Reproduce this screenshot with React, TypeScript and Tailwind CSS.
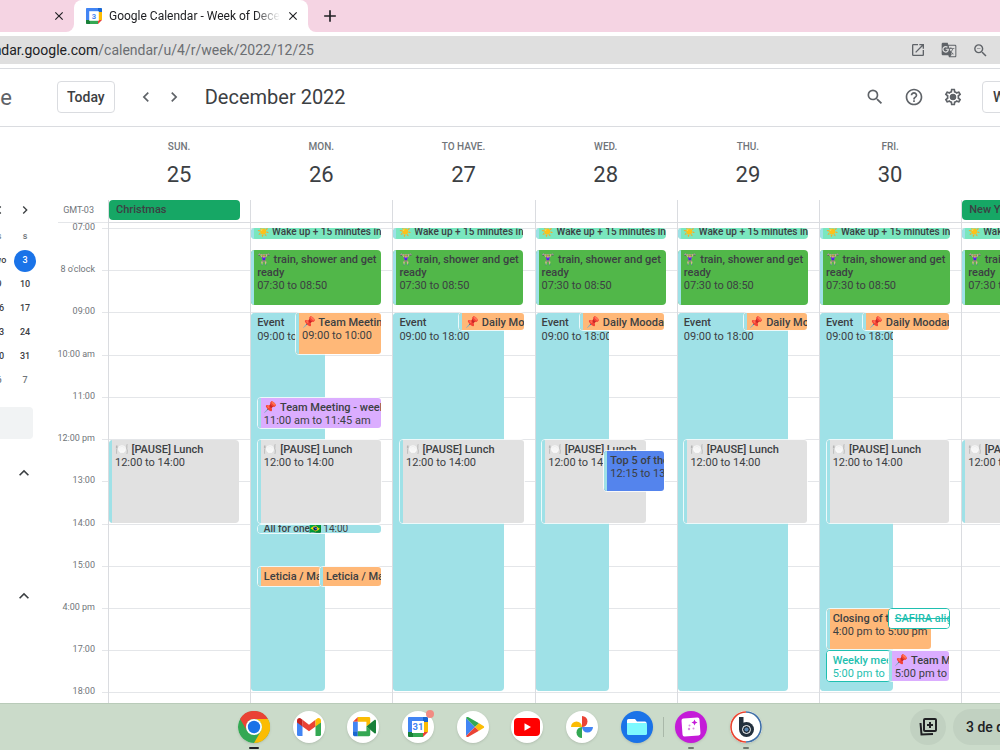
import React from 'react'
import clsx from 'clsx'
import {
  MdAdd,
  MdChevronLeft,
  MdChevronRight,
  MdClose,
  MdExpandLess,
  MdGTranslate,
  MdHelpOutline,
  MdOpenInNew,
  MdOutlineSettings,
  MdSearch,
  MdZoomOut,
} from 'react-icons/md'

const FIRST_HOUR = 7
// the last row only shows a quarter of an hour
const VISIBLE_HOURS = 11.25

type Tone = 'mint' | 'green' | 'cyan' | 'orange' | 'purple' | 'gray' | 'blue' | 'outline'

interface CalendarEvent {
  title: string
  time?: string
  start: number
  end: number
  left: number
  width: number
  tone: Tone
  /** Stacked on top of another event, so it gets a white edge */
  stacked?: boolean
  declined?: boolean
}

interface Day {
  name: string
  date: string
  allDay?: string
  events: CalendarEvent[]
}

const TONES: Record<Tone, string> = {
  mint: 'bg-[#7ae7bf] border-[#9fe1e7]',
  green: 'bg-[#51b749] border-[#9fe1e7]',
  cyan: 'bg-[#9fe1e7] border-[#9fe1e7]',
  orange: 'bg-[#ffb878] border-[#9fe1e7]',
  purple: 'bg-[#dbadff] border-[#9fe1e7]',
  gray: 'bg-[#e1e1e1] border-[#9fe1e7]',
  blue: 'bg-[#5484ed] border-[#9fe1e7]',
  outline: 'bg-white border-white text-[#1fbfb0]',
}

const wakeUp: CalendarEvent = {
  title: '☀️ Wake up + 15 minutes in bed',
  start: 7,
  end: 7.25,
  left: 0,
  width: 92,
  tone: 'mint',
}

const train: CalendarEvent = {
  title: '🏋🏼‍♀️ train, shower and get ready',
  time: '07:30 to 08:50',
  start: 7.5,
  end: 8.84,
  left: 0,
  width: 92,
  tone: 'green',
}

const work = (width: number, time = '09:00 to 18:00'): CalendarEvent => ({
  title: 'Event',
  time,
  start: 9,
  end: 18,
  left: 0,
  width,
  tone: 'cyan',
})

const lunch = (left: number, width: number): CalendarEvent => ({
  title: '🍽️ [PAUSE] Lunch',
  time: '12:00 to 14:00',
  start: 12,
  end: 14,
  left,
  width,
  tone: 'gray',
  stacked: left > 0,
})

const daily = (left: number, width: number): CalendarEvent => ({
  title: '📌 Daily Moodar',
  start: 9,
  end: 9.45,
  left,
  width,
  tone: 'orange',
  stacked: true,
})

const DAYS: Day[] = [
  { name: 'Sun.', date: '25', allDay: 'Christmas', events: [lunch(0, 92)] },
  {
    name: 'Mon.',
    date: '26',
    events: [
      wakeUp,
      train,
      work(52),
      { title: '📌 Team Meeting', time: '09:00 to 10:00', start: 9, end: 10, left: 31, width: 62, tone: 'orange', stacked: true },
      { title: '📌 Team Meeting - weekly', time: '11:00 am to 11:45 am', start: 11, end: 11.75, left: 4, width: 89, tone: 'purple', stacked: true },
      lunch(4, 89),
      { title: 'All for one🇧🇷', time: '14:00', start: 14, end: 14.25, left: 4, width: 89, tone: 'cyan', stacked: true },
      { title: 'Leticia / Mari', start: 15, end: 15.5, left: 4, width: 46, tone: 'orange', stacked: true },
      { title: 'Leticia / Mari', start: 15, end: 15.5, left: 48, width: 45, tone: 'orange', stacked: true },
    ],
  },
  { name: 'To have.', date: '27', events: [wakeUp, train, work(78), daily(46, 47), lunch(4, 89)] },
  {
    name: 'Wed.',
    date: '28',
    events: [
      wakeUp,
      train,
      work(52),
      daily(31, 61),
      lunch(4, 75),
      { title: 'Top 5 of the week', time: '12:15 to 13:15', start: 12.25, end: 13.25, left: 48, width: 44, tone: 'blue', stacked: true },
    ],
  },
  { name: 'Thu.', date: '29', events: [wakeUp, train, work(78), daily(46, 46), lunch(4, 88)] },
  {
    name: 'Fri.',
    date: '30',
    events: [
      wakeUp,
      train,
      work(52),
      daily(30, 62),
      lunch(4, 88),
      { title: 'Closing of the week', time: '4:00 pm to 5:00 pm', start: 16, end: 17, left: 4, width: 75, tone: 'orange', stacked: true },
      { title: 'SAFIRA alignment', start: 16, end: 16.5, left: 48, width: 44, tone: 'outline', declined: true },
      { title: 'Weekly meeting', time: '5:00 pm to 5:45 pm', start: 17, end: 17.75, left: 4, width: 46, tone: 'outline' },
      { title: '📌 Team Meeting', time: '5:00 pm to 5:45 pm', start: 17, end: 17.75, left: 48, width: 44, tone: 'purple', stacked: true },
    ],
  },
  { name: '', date: '', allDay: "New Year's Eve", events: [wakeUp, train, lunch(0, 92)] },
]

const HOURS = [
  '07:00',
  "8 o'clock",
  '09:00',
  '10:00 am',
  '11:00',
  '12:00 pm',
  '13:00',
  '14:00',
  '15:00',
  '4:00 pm',
  '17:00',
  '18:00',
]

const MINI_MONTH = [
  ['two', '3'],
  ['9', '10'],
  ['16', '17'],
  ['23', '24'],
  ['30', '31'],
  ['6', '7'],
]

// Saturday is cut by the window edge: its column is 3/11 of a day, its content a full day wide
const DAY_COLUMNS = 'grid grid-cols-[repeat(6,minmax(0,11fr))_minmax(0,3fr)]'
const HOUR_ROWS = 'grid grid-rows-[repeat(11,minmax(0,4fr))_minmax(0,1fr)]'

const dayWidth = (index: number) => (index === DAYS.length - 1 ? 'w-[366%]' : 'w-full')

function CalendarLogo({ day, className }: { day: string; className?: string }) {
  return (
    <svg viewBox="0 0 20 20" className={className} aria-hidden="true">
      <path fill="#4285f4" d="M1 0h14v5H5v10H0V1a1 1 0 0 1 1-1z" />
      <path fill="#1967d2" d="M15 0h4a1 1 0 0 1 1 1v4h-5z" />
      <path fill="#fbbc04" d="M15 5h5v10h-5z" />
      <path fill="#34a853" d="M5 15h10v5H5z" />
      <path fill="#188038" d="M0 15h5v5H1a1 1 0 0 1-1-1z" />
      <path fill="#ea4335" d="M15 15h5l-5 5z" />
      <path fill="#fff" d="M4 4h12v12H4z" />
      <text
        x="10"
        y="13.4"
        textAnchor="middle"
        fontSize="9.5"
        fontWeight="700"
        fontFamily="Roboto, sans-serif"
        fill="#4285f4"
      >
        {day}
      </text>
    </svg>
  )
}

function TabStrip() {
  return (
    <div className="flex h-8 shrink-0 bg-white text-[#202124]">
      <div className="flex w-[74px] items-center justify-end rounded-br-lg bg-[#f5d4e3] pr-2">
        <button type="button" aria-label="Close tab">
          <MdClose className="size-3.5" />
        </button>
      </div>
      <div className="w-[234px] bg-[#f5d4e3]">
        <div className="flex h-full items-center rounded-t-lg bg-white pr-2 pl-3">
          <CalendarLogo day="3" className="mr-[7px] size-4 shrink-0" />
          <span className="flex-1 overflow-hidden mask-r-from-85% text-xs whitespace-nowrap">
            Google Calendar - Week of December
          </span>
          <button type="button" aria-label="Close tab" className="ml-1.5">
            <MdClose className="size-3.5" />
          </button>
        </div>
      </div>
      <div className="flex flex-1 items-center rounded-bl-lg bg-[#f5d4e3] pl-3">
        <button type="button" aria-label="New tab">
          <MdAdd className="size-5" />
        </button>
      </div>
    </div>
  )
}

function AddressBar() {
  return (
    <div className="shrink-0 border-b border-[#dadce0] bg-white pt-1 pb-1">
      <div className="flex h-7 items-center justify-between bg-[#dfdfdf] pr-[11px]">
        <p className="flex w-[314px] justify-end overflow-hidden text-sm whitespace-nowrap text-[#6b6e72]">
          <span className="text-[#202124]">calendar.google.com</span>/calendar/u/4/r/week/2022/12/25
        </p>
        <div className="flex items-center gap-[15px] text-[#5f6368]">
          <button type="button" aria-label="Open in new window">
            <MdOpenInNew className="size-4" />
          </button>
          <button type="button" aria-label="Translate this page">
            <MdGTranslate className="size-4" />
          </button>
          <button type="button" aria-label="Zoom out">
            <MdZoomOut className="size-[17px]" />
          </button>
        </div>
      </div>
    </div>
  )
}

function CalendarHeader() {
  return (
    <header className="flex h-[58px] shrink-0 items-center overflow-hidden border-b border-[#dadce0] pb-px text-[#3c4043]">
      <span className="flex w-3 justify-end text-[22px] whitespace-nowrap text-[#5f6368]">Google Agende</span>
      <button
        type="button"
        className="ml-[45px] h-8 rounded border border-[#dadce0] px-[9px] text-sm font-medium"
      >
        Today
      </button>
      <div className="ml-[21px] flex gap-2 text-[#5f6368]">
        <button type="button" aria-label="Previous week">
          <MdChevronLeft className="size-5" />
        </button>
        <button type="button" aria-label="Next week">
          <MdChevronRight className="size-5" />
        </button>
      </div>
      <h1 className="ml-[21px] text-xl">December 2022</h1>
      <div className="ml-auto flex items-center gap-[19px] text-[#5f6368]">
        <button type="button" aria-label="Search">
          <MdSearch className="size-5" />
        </button>
        <button type="button" aria-label="Support">
          <MdHelpOutline className="size-5" />
        </button>
        <button type="button" aria-label="Settings" className="relative">
          <MdOutlineSettings className="size-5" />
          <span className="absolute inset-0 m-auto size-1.5 rounded-full bg-[#5f6368]" />
        </button>
        <div className="w-[18px]">
          <button
            type="button"
            className="h-8 w-20 rounded border border-[#dadce0] pl-2.5 text-left text-sm font-medium text-[#3c4043]"
          >
            Week
          </button>
        </div>
      </div>
    </header>
  )
}

function Sidebar() {
  return (
    <aside className="flex w-[38px] shrink-0 flex-col items-end overflow-hidden pt-[75px] text-[9px] font-medium text-[#3c4043]">
      <div className="grid w-[52px] grid-cols-2 justify-items-center">
        <button type="button" aria-label="Previous month">
          <MdChevronLeft className="size-4" />
        </button>
        <button type="button" aria-label="Next month">
          <MdChevronRight className="size-4" />
        </button>
      </div>
      <table className="mt-[7px] w-[52px] table-fixed text-center">
        <thead>
          <tr className="h-6 text-[#70757a]">
            <th className="p-0 text-center font-medium">s</th>
            <th className="p-0 text-center font-medium">s</th>
          </tr>
        </thead>
        <tbody>
          {MINI_MONTH.map(([friday, saturday], i) => (
            <tr key={saturday} className={clsx('h-6', i === MINI_MONTH.length - 1 && 'text-[#70757a]')}>
              <td className="p-0">{friday}</td>
              <td className="p-0">
                <span
                  className={clsx(
                    'mx-auto flex size-[22px] items-center justify-center rounded-full',
                    i === 0 && 'bg-[#1a73e8] text-white'
                  )}
                >
                  {saturday}
                </span>
              </td>
            </tr>
          ))}
        </tbody>
      </table>
      <input
        type="text"
        aria-label="Search for people"
        className="mt-3.5 mr-[5px] h-8 w-[200px] shrink-0 rounded bg-[#f1f3f4]"
      />
      <button type="button" aria-label="My calendars" className="mt-6 mr-1">
        <MdExpandLess className="size-5" />
      </button>
      <button type="button" aria-label="Other calendars" className="mt-[103px] mr-1">
        <MdExpandLess className="size-5" />
      </button>
    </aside>
  )
}

function EventCard({ event }: { event: CalendarEvent }) {
  const { title, time, start, end, left, width, tone, stacked, declined } = event
  const hours = end - start
  const tiny = hours <= 0.25
  const edged = stacked || tone === 'outline'

  return (
    <button
      type="button"
      className={clsx(
        'absolute overflow-hidden rounded text-left text-[#3c4043]',
        !edged && !tiny && 'mt-px',
        stacked && 'border border-white/80',
        tone === 'outline' && 'border border-[#1fbfb0]'
      )}
      style={{
        top: `${((start - FIRST_HOUR) / VISIBLE_HOURS) * 100}%`,
        height: `calc(${(hours / VISIBLE_HOURS) * 100}% - ${edged || tiny ? 0 : 2}px)`,
        left: `${left}%`,
        width: `${width}%`,
      }}
    >
      <span
        className={clsx(
          'flex h-full border-l-[3px] pl-[3px]',
          tiny ? 'gap-1 text-[10px] leading-[8px]' : 'flex-col pt-[3px] text-[11px] leading-[13px]',
          tone === 'cyan' && 'gap-px',
          TONES[tone]
        )}
      >
        <span
          className={clsx(
            'font-medium',
            tone !== 'green' && 'whitespace-nowrap',
            declined && 'line-through'
          )}
        >
          {title}
        </span>
        {time && <span className="whitespace-nowrap">{time}</span>}
      </span>
    </button>
  )
}

function WeekGrid() {
  return (
    <section className="flex min-w-0 flex-1 flex-col">
      <div className="flex h-[73px] shrink-0">
        <div className="w-[70px] shrink-0" />
        <div className={clsx('flex-1', DAY_COLUMNS)}>
          {DAYS.map((day, i) => (
            <h2 key={i} className="flex flex-col items-center pt-[13px] font-normal">
              <span className="text-[10px] leading-[14px] font-medium text-[#70757a] uppercase">{day.name}</span>
              <span className="mt-1.5 text-[22px] leading-[30px] text-[#3c4043]">{day.date}</span>
            </h2>
          ))}
        </div>
      </div>

      <div className="flex h-[23px] shrink-0 pl-5">
        <div className="w-[50px] shrink-0 border-b border-[#e4e6e9] pr-3.5 text-right text-[9px] leading-[20px] text-[#70757a]">
          GMT-03
        </div>
        <div className={clsx('flex-1 border-b border-[#dadce0]', DAY_COLUMNS)}>
          {DAYS.map((day, i) => (
            <div key={i} className="border-l border-[#dadce0]">
              <div className={clsx('flex', dayWidth(i))}>
                {day.allDay && (
                  <button
                    type="button"
                    className="h-5 w-[93%] overflow-hidden rounded bg-[#16a765] pl-[7px] text-left text-[11px] font-medium whitespace-nowrap text-[#3c4043]"
                  >
                    {day.allDay}
                  </button>
                )}
              </div>
            </div>
          ))}
        </div>
      </div>

      <div className="flex min-h-0 flex-1">
        <div className={clsx('w-16 shrink-0 pt-[5px] pr-[7px]', HOUR_ROWS)}>
          {HOURS.map((hour) => (
            <div key={hour} className="-mt-[7px] text-right text-[9px] leading-3 text-[#70757a]">
              {hour}
            </div>
          ))}
        </div>
        <div className="relative flex min-w-0 flex-1 flex-col">
          <div className={clsx('flex-1 pt-[5px]', HOUR_ROWS)}>
            {HOURS.map((hour) => (
              <div key={hour} className="border-t border-[#e4e6e9]" />
            ))}
          </div>
          <div className={clsx('absolute inset-y-0 right-0 left-1.5', DAY_COLUMNS)}>
            {DAYS.map((day, i) => (
              <div key={i} className="border-l border-[#dadce0] pt-[5px]">
                <div className={clsx('relative h-full', dayWidth(i))}>
                  {day.events.map((event, j) => (
                    <EventCard key={j} event={event} />
                  ))}
                </div>
              </div>
            ))}
          </div>
        </div>
      </div>
    </section>
  )
}

function ChromeLogo() {
  return (
    <svg viewBox="0 0 32 32" className="size-8">
      <circle cx="16" cy="16" r="16" fill="#34a853" />
      <path fill="#ea4335" d="M2.1 8A16 16 0 0 1 29.9 8H16a8 8 0 0 0-6.9 12z" />
      <path fill="#fbbc04" d="M29.9 8A16 16 0 0 1 16 32l6.9-12A8 8 0 0 0 16 8z" />
      <circle cx="16" cy="16" r="8" fill="#fff" />
      <circle cx="16" cy="16" r="6.2" fill="#1a73e8" />
    </svg>
  )
}

function GmailLogo() {
  return (
    <svg viewBox="0 0 24 18" className="w-6">
      <path fill="#4285f4" d="M0 4l5.5 3.5V18H1.6A1.6 1.6 0 0 1 0 16.4z" />
      <path fill="#34a853" d="M24 4l-5.5 3.5V18h3.9a1.6 1.6 0 0 0 1.6-1.6z" />
      <path fill="#ea4335" d="M5.5 1.8L12 6.7l6.5-4.9v6.6L12 13.3 5.5 8.4z" />
      <path fill="#c5221f" d="M0 2.7C0 .3 2.7-.8 4.4.9l1.1.9v6.6L0 4.5z" />
      <path fill="#fbbc04" d="M24 2.7c0-2.4-2.7-3.5-4.4-1.8l-1.1.9v6.6L24 4.5z" />
    </svg>
  )
}

function MeetLogo() {
  return (
    <svg viewBox="0 0 24 20" className="ml-0.5 w-[23px]">
      <path fill="#ea4335" d="M5 0v5H0z" />
      <path fill="#4285f4" d="M0 5h5v10H0z" />
      <path fill="#1967d2" d="M0 15h5v5H1.5A1.5 1.5 0 0 1 0 18.5z" />
      <path fill="#fbbc04" d="M5 0h11.5A1.5 1.5 0 0 1 18 1.5V7l-4 3V5H5z" />
      <path fill="#34a853" d="M5 15h9v-5l4 3v5.5a1.5 1.5 0 0 1-1.5 1.5H5z" />
      <path fill="#188038" d="M14 10l8.7-7.1c.6-.4 1.3 0 1.3.7v12.8c0 .7-.7 1.1-1.3.7z" />
    </svg>
  )
}

function PlayLogo() {
  return (
    <svg viewBox="0 0 20 20" className="ml-1 size-5">
      <path fill="#4285f4" d="M1 1v18l9-9z" />
      <path fill="#34a853" d="M1 1c.3-1 1.5-1.3 2.5-.7L14 6.3 10 10z" />
      <path fill="#ea4335" d="M1 19c.3 1 1.5 1.3 2.5.7L14 13.7 10 10z" />
      <path fill="#fbbc04" d="M14 6.3l4.5 2.6c.9.5.9 1.7 0 2.2L14 13.7 10 10z" />
    </svg>
  )
}

function YouTubeLogo() {
  return (
    <svg viewBox="0 0 26 18" className="w-[26px]">
      <rect width="26" height="18" rx="4" fill="#f00" />
      <path fill="#fff" d="M10.5 5.2l6.5 3.8-6.5 3.8z" />
    </svg>
  )
}

function PhotosLogo() {
  return (
    <svg viewBox="0 0 22 22" className="size-[22px]">
      <path fill="#ea4335" d="M11 0a5.5 5.5 0 0 1 0 11z" />
      <path fill="#4285f4" d="M22 11a5.5 5.5 0 0 1-11 0z" />
      <path fill="#34a853" d="M11 22a5.5 5.5 0 0 1 0-11z" />
      <path fill="#fbbc04" d="M0 11a5.5 5.5 0 0 1 11 0z" />
    </svg>
  )
}

function FilesLogo() {
  return (
    <svg viewBox="0 0 20 18" className="w-5">
      <path fill="#fff" d="M1.5 1H8l2 2.5h8A1.5 1.5 0 0 1 19.5 5v3H0V2.5A1.5 1.5 0 0 1 1.5 1z" />
      <path fill="#7df9ff" d="M0 5h18.5A1.5 1.5 0 0 1 20 6.5v9a1.5 1.5 0 0 1-1.5 1.5h-17A1.5 1.5 0 0 1 0 15.5z" />
    </svg>
  )
}

function ScreencastLogo() {
  return (
    <svg viewBox="0 0 20 20" className="size-5">
      <rect x="1" y="1" width="18" height="18" rx="2" fill="#fff" transform="rotate(-4 10 10)" />
      <path fill="#c41bd8" d="M13.5 2.5l.9 2.1 2.1.9-2.1.9-.9 2.1-.9-2.1-2.1-.9 2.1-.9z" />
      <circle cx="8.5" cy="8.5" r="1" fill="#d98be4" />
      <circle cx="8" cy="12" r="1.2" fill="#d98be4" />
      <circle cx="12.5" cy="11.5" r="1" fill="#d98be4" />
    </svg>
  )
}

function BrowserStackLogo() {
  return (
    <svg viewBox="0 0 32 32" className="size-8">
      <circle cx="16" cy="16" r="16" fill="#fff" />
      <path d="M16 1a15 15 0 0 0 0 30" fill="none" stroke="#e8432d" strokeWidth="1.6" />
      <path d="M16 1a15 15 0 0 1 0 30" fill="none" stroke="#3d6ea5" strokeWidth="1.6" />
      <path d="M9 6h4.5v12H9z" fill="#23303d" />
      <circle cx="16.5" cy="18.5" r="7.5" fill="#23303d" />
      <circle cx="16.5" cy="18.5" r="4" fill="none" stroke="#fff" strokeWidth="1" />
      <circle cx="16.5" cy="18.5" r="2" fill="#5b88b5" />
    </svg>
  )
}

const APPS = [
  { name: 'Chrome', bg: 'bg-white', icon: <ChromeLogo />, running: 'bg-[#202124]' },
  { name: 'Gmail', bg: 'bg-white', icon: <GmailLogo /> },
  { name: 'Meet', bg: 'bg-white', icon: <MeetLogo /> },
  { name: 'Calendar', bg: 'bg-white', icon: <CalendarLogo day="31" className="size-5" />, badge: true },
  { name: 'Play Store', bg: 'bg-white', icon: <PlayLogo /> },
  { name: 'YouTube', bg: 'bg-white', icon: <YouTubeLogo /> },
  { name: 'Photos', bg: 'bg-white', icon: <PhotosLogo /> },
  { name: 'Files', bg: 'bg-[#1a73e8]', icon: <FilesLogo /> },
  { name: 'Screencast', bg: 'bg-[#c41bd8]', icon: <ScreencastLogo />, running: 'bg-[#6f7a70]', divided: true },
  { name: 'BrowserStack', bg: 'bg-white', icon: <BrowserStackLogo />, running: 'bg-[#6f7a70]' },
]

function Shelf() {
  return (
    <footer className="relative grid h-[47px] shrink-0 grid-cols-[1fr_auto_1fr] items-center border-t border-[#b9cbb9] bg-[#cbdbca]">
      <div />
      <div className="flex w-[524px] justify-between">
        {APPS.map((app) => (
          <button
            key={app.name}
            type="button"
            aria-label={app.name}
            className={clsx('relative flex size-8 items-center justify-center rounded-full shadow', app.bg)}
          >
            {app.icon}
            {app.badge && <span className="absolute -top-px right-0 size-2 rounded-full bg-[#f28b82]" />}
            {app.divided && <span className="absolute top-1.5 -left-3 h-5 w-px bg-[#a9b8a9]" />}
            {app.running && (
              <span className={clsx('absolute -bottom-1.5 h-0.5 rounded-full', app.running, app.name === 'Chrome' ? 'w-2.5' : 'w-1.5')} />
            )}
          </button>
        ))}
      </div>
      <div className="flex items-center justify-end gap-[7px] overflow-hidden text-[#202124]">
        <button
          type="button"
          aria-label="Holding space"
          className="flex size-9 items-center justify-center rounded-full bg-[#c1d1c1]"
        >
          <svg viewBox="0 0 20 20" className="size-5" fill="none" stroke="currentColor" strokeWidth="2">
            <rect x="6" y="2" width="12" height="12" rx="1" />
            <path d="M12 5v6M9 8h6" />
            <path d="M2.5 6l1 11.5 11.5-.5" />
          </svg>
        </button>
        <button
          type="button"
          className="h-9 w-[47px] overflow-hidden rounded-l-full bg-[#c1d1c1] pl-[13px] text-left text-sm font-medium whitespace-nowrap"
        >
          3 de dez
        </button>
      </div>
    </footer>
  )
}

export default function App() {
  return (
    <div className="flex h-screen flex-col overflow-hidden bg-white font-[Roboto,'Noto_Color_Emoji',sans-serif]">
      <TabStrip />
      <AddressBar />
      <CalendarHeader />
      <main className="flex min-h-0 flex-1">
        <Sidebar />
        <WeekGrid />
      </main>
      <Shelf />
    </div>
  )
}
